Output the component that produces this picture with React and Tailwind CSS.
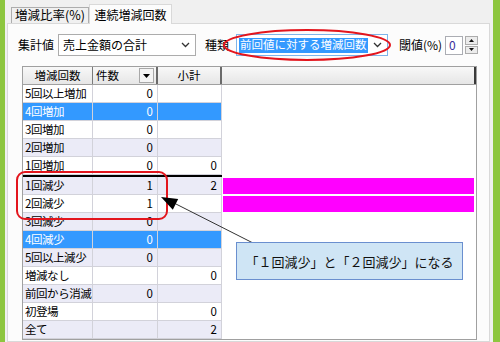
import React from 'react';

const rows = [
  { label: '5回以上増加', count: '0', sub: '' },
  { label: '4回増加', count: '0', sub: '', sel: true },
  { label: '3回増加', count: '0', sub: '' },
  { label: '2回増加', count: '0', sub: '' },
  { label: '1回増加', count: '0', sub: '0', line: true },
  { label: '1回減少', count: '1', sub: '2', bar: true },
  { label: '2回減少', count: '1', sub: '', bar: true },
  { label: '3回減少', count: '0', sub: '' },
  { label: '4回減少', count: '0', sub: '', sel: true },
  { label: '5回以上減少', count: '0', sub: '' },
  { label: '増減なし', count: '', sub: '0' },
  { label: '前回から消滅', count: '0', sub: '' },
  { label: '初登場', count: '', sub: '0' },
  { label: '全て', count: '', sub: '2' },
];

function Chevron() {
  return (
    <svg width="9" height="6" viewBox="0 0 9 6" className="shrink-0">
      <path d="M1 1 L4.5 4.5 L8 1" fill="none" stroke="#333" strokeWidth="1.3" />
    </svg>
  );
}

function GridRow({ row, index }) {
  const bg = row.sel ? 'bg-[#3399ff] text-white' : index % 2 === 1 ? 'bg-[#ebebf7] text-black' : 'bg-white text-black';
  return (
    <>
      <div className="flex h-[18px]">
        <div className={`w-[70px] flex items-center pl-[2px] border-r border-b border-[#d2d2da] overflow-hidden tracking-[-0.45px] ${bg}`}>{row.label}</div>
        <div className={`w-[65px] flex items-center justify-end pr-[4px] border-r border-b border-[#d2d2da] ${bg}`}>{row.count}</div>
        <div className={`w-[64px] flex items-center justify-end pr-[4px] border-r border-b border-[#d2d2da] ${bg}`}>{row.sub}</div>
        <div className="flex-1 bg-white flex items-start pt-px pl-px">
          {row.bar && <div className="h-[16px] w-[251px] bg-[#ff00ff]" />}
        </div>
      </div>
      {row.line && <div className="h-[2px] w-[199px] bg-black" />}
    </>
  );
}

export default function App() {
  return (
    <div className="w-[500px] h-[342px] flex overflow-hidden relative whitespace-nowrap text-[11.5px] leading-none text-black font-['Noto_Sans_CJK_JP','Noto_Sans',sans-serif]">
      <div className="w-[5px] bg-[#8dc63f]" />
      <div className="flex-1 bg-[#f0f0f0] flex flex-col pt-[4px]">
        {/* tabs */}
        <div className="flex items-end h-[19px] pl-[6px] relative z-10">
          <div className="w-[78px] h-[16px] border border-b-0 border-[#adadad] bg-[#f0f0f0] flex items-center justify-center text-[12.5px]">
            増減比率(%)
          </div>
          <div className="w-[83px] h-[20px] -mb-px border border-b-0 border-[#d9d9d9] bg-[#fcfcfc] flex items-center justify-center text-[12px]">
            連続増減回数
          </div>
        </div>

        {/* panel */}
        <div className="ml-[2px] w-[483px] flex-1 border border-[#d9d9d9] bg-[#fcfcfc] pl-[10px] pt-[10px]">
          <div className="flex items-center h-[22px]">
            <div className="w-[40px] text-[12px]">集計値</div>
            <div className="w-[138px] h-[22px] border border-[#acacac] bg-white flex items-center justify-between pl-[4px] pr-[5px] text-[12px]">
              <span>売上金額の合計</span>
              <Chevron />
            </div>
            <div className="ml-[9px] w-[31px] text-[12px]">種類</div>
            <div className="w-[152px] h-[22px] border border-[#7eb4ea] bg-white flex items-center justify-between pl-[2px] pr-[5px]">
              <span className="bg-[#3399ff] text-white px-[1px] h-[15px] flex items-center">前回値に対する増減回数</span>
              <Chevron />
            </div>
            <div className="ml-[11px] w-[46px] text-[12px]">閾値(%)</div>
            <div className="w-[18px] h-[19px] border border-[#abadb3] bg-white flex items-center pl-[3px] text-[#3a2f9a] text-[12px]">0</div>
            <div className="ml-[2px] w-[13px] h-[18px] flex flex-col gap-px">
              <div className="flex-1 border border-[#acacac] bg-[#ececec] flex items-center justify-center">
                <svg width="5" height="3" viewBox="0 0 5 3"><path d="M0 3 L2.5 0 L5 3 Z" fill="#111" /></svg>
              </div>
              <div className="flex-1 border border-[#acacac] bg-[#ececec] flex items-center justify-center">
                <svg width="5" height="3" viewBox="0 0 5 3"><path d="M0 0 L2.5 3 L5 0 Z" fill="#111" /></svg>
              </div>
            </div>
          </div>

          {/* grid */}
          <div className="mt-[10px] ml-[4px] w-[455px] border border-[#a0a0a0] bg-white">
            <div className="flex h-[18px] bg-gradient-to-b from-[#f8f8f8] to-[#e6e6e6] border-b border-[#a0a0a0]">
              <div className="w-[70px] flex items-center justify-center border-r border-[#7a7a7a]">増減回数</div>
              <div className="w-[65px] flex items-center justify-between pl-[3px] pr-[2px] border-r-2 border-[#6a6a6a]">
                <span>件数</span>
                <div className="w-[15px] h-[15px] border border-[#a8a8a8] bg-[#f4f4f4] flex items-center justify-center">
                  <svg width="7" height="4" viewBox="0 0 7 4"><path d="M0 0 L3.5 4 L7 0 Z" fill="#000" /></svg>
                </div>
              </div>
              <div className="w-[64px] flex items-center justify-center border-r-2 border-[#6a6a6a]">小計</div>
              <div className="flex-1 border-r-2 border-[#3a3a3a]" />
            </div>
            {rows.map((r, i) => (
              <GridRow key={r.label} row={r} index={i} />
            ))}
          </div>
        </div>
      </div>
      <div className="w-[7px] bg-[#8dc63f]" />

      {/* annotations */}
      <svg className="absolute left-0 top-0 pointer-events-none" width="500" height="342" viewBox="0 0 500 342">
        <ellipse cx="307" cy="45" rx="83" ry="15" fill="none" stroke="#e3151d" strokeWidth="2" />
        <rect x="17" y="172" width="150" height="47" rx="8" fill="none" stroke="#e3151d" strokeWidth="2" />
        <line x1="253" y1="243" x2="172" y2="202" stroke="#333" strokeWidth="1" />
        <path d="M161 197 L178.2 199 L172.8 209.8 Z" fill="#000" />
      </svg>
      <div className="absolute left-[236px] top-[242px] w-[227px] h-[38px] border border-[#6a8fcf] bg-[#cfe5f5] flex items-center justify-center text-[13px] text-[#111]">
        「１回減少」と「２回減少」になる
      </div>
    </div>
  );
}
